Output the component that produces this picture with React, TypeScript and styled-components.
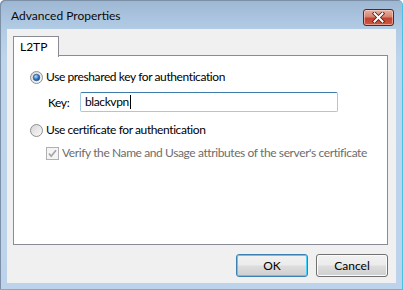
import styled, { createGlobalStyle } from 'styled-components';

const GlobalStyle = createGlobalStyle`
  html, body {
    margin: 0;
    padding: 0;
    background: #ffffff;
  }
  body {
    font-family: Lato, "Noto Sans", sans-serif;
    font-size: 12px;
    color: #000;
  }
`

const Frame = styled.div`
  width: 403px;
  height: 290px;
  box-sizing: border-box;
  display: flex;
  flex-direction: column;
  background: linear-gradient(180deg, #9db7d3 0px, #b2cbe5 28px, #bdd4ec 60px, #bcd3eb 100%);
  border-right: 1px solid #45c2e6;
  border-bottom: 1px solid #45c2e6;
  border-top-left-radius: 5px;
  border-top-right-radius: 5px;
  box-shadow: inset 1px 1px 0 #7b8fa6;
`

const TitleBar = styled.div`
  height: 29px;
  flex: 0 0 29px;
  display: flex;
  align-items: flex-start;
  justify-content: space-between;
  padding: 0 8px 0 11px;
`

const Title = styled.span`
  margin-top: 8px;
  font-size: 12px;
  line-height: 16px;
  color: #0a0a0a;
`

const CloseButton = styled.div`
  margin-top: 9px;
  width: 31px;
  height: 17px;
  box-sizing: border-box;
  border: 1px solid #5b2622;
  border-radius: 3px;
  background: linear-gradient(180deg, #e8b1a6 0%, #d7836f 45%, #c2432f 55%, #cb5a42 100%);
  box-shadow: inset 0 0 0 1px rgba(255, 220, 210, 0.55);
  display: flex;
  align-items: center;
  justify-content: center;
`

const Client = styled.div`
  flex: 1;
  margin: 0 6px 6px 7px;
  background: #f0f0f0;
  display: flex;
  flex-direction: column;
  padding: 7px 8px 0 6px;
`

const TabStrip = styled.div`
  display: flex;
  height: 20px;
  position: relative;
  z-index: 1;
  margin-bottom: -1px;
`

const Tab = styled.div`
  width: 46px;
  box-sizing: border-box;
  height: 21px;
  background: #ffffff;
  border: 1px solid #898c95;
  border-bottom: none;
  padding: 2px 0 0 6px;
  line-height: 16px;
`

const Panel = styled.div`
  height: 190px;
  box-sizing: border-box;
  background: #ffffff;
  border: 1px solid #898c95;
  padding: 13px 0 0 16px;
  display: flex;
  flex-direction: column;
  letter-spacing: -0.4px;
`

const OptionRow = styled.label<{ $indent?: number; $gap?: number }>`
  display: flex;
  align-items: center;
  height: 16px;
  margin-left: ${p => p.$indent ?? 0}px;
  margin-top: ${p => p.$gap ?? 0}px;
  gap: 3px;
  line-height: 16px;
  svg {
    flex: 0 0 auto;
  }
`

const OptionText = styled.span<{ $disabled?: boolean }>`
  color: ${p => (p.$disabled ? '#6d6d6d' : '#000')};
  white-space: nowrap;
`

const KeyRow = styled.div`
  display: flex;
  align-items: center;
  margin-top: 7px;
  margin-left: 18px;
`

const KeyLabel = styled.span`
  width: 32px;
`

const KeyInput = styled.div`
  width: 258px;
  height: 20px;
  box-sizing: border-box;
  border: 1px solid #a4c9e3;
  border-top-color: #3d7bad;
  border-radius: 2px;
  background: #fff;
  padding: 0 0 0 4px;
  display: flex;
  align-items: center;
  line-height: 16px;
`

const Caret = styled.span`
  display: inline-block;
  width: 1px;
  height: 14px;
  background: #000;
  margin-left: 1px;
`

const ButtonBar = styled.div`
  display: flex;
  justify-content: flex-end;
  gap: 8px;
  margin-top: 9px;
`

const Button = styled.div<{ $default?: boolean }>`
  width: 72px;
  height: 23px;
  box-sizing: border-box;
  border: 1px solid ${p => (p.$default ? '#3c7fb1' : '#707070')};
  border-radius: 3px;
  background: linear-gradient(180deg, #f2f2f2 0%, #ebebeb 48%, #dddddd 52%, #cfcfcf 100%);
  box-shadow: inset 0 0 0 1px ${p => (p.$default ? '#48d2fb' : '#fcfcfc')};
  display: flex;
  align-items: center;
  justify-content: center;
  line-height: 16px;
`

const Radio = ({ checked }: { checked?: boolean }) => (
  <svg width="13" height="13" viewBox="0 0 13 13">
    <defs>
      <linearGradient id="rbg" x1="0" y1="0" x2="1" y2="1">
        <stop offset="0" stopColor="#d5d5d5" />
        <stop offset="1" stopColor="#fbfbfb" />
      </linearGradient>
      <radialGradient id="rdot" cx="0.4" cy="0.35" r="0.7">
        <stop offset="0" stopColor="#b8e1ff" />
        <stop offset="0.5" stopColor="#3d85cc" />
        <stop offset="1" stopColor="#14407a" />
      </radialGradient>
    </defs>
    <circle cx="6.5" cy="6.5" r="6" fill="url(#rbg)" stroke="#8e8f8f" strokeWidth="1" />
    {checked && <circle cx="6.5" cy="6.5" r="3.3" fill="url(#rdot)" stroke="#1c4f86" strokeWidth="0.6" />}
  </svg>
)

const DisabledCheck = () => (
  <svg width="13" height="13" viewBox="0 0 13 13">
    <rect x="0.5" y="0.5" width="12" height="12" fill="#f4f4f4" stroke="#b1b1b1" />
    <path d="M3 6.5 L5.2 9.3 L10 3.2" fill="none" stroke="#a3a3a3" strokeWidth="1.6" />
  </svg>
)

export default function App() {
  return (
    <>
      <GlobalStyle />
      <Frame>
        <TitleBar>
          <Title>Advanced Properties</Title>
          <CloseButton>
            <svg width="13" height="11" viewBox="0 0 13 11">
              <path d="M2.5 1.5 L10.5 9.5 M10.5 1.5 L2.5 9.5" stroke="#4a1a16" strokeWidth="3.6" strokeLinecap="square" />
              <path d="M2.5 1.5 L10.5 9.5 M10.5 1.5 L2.5 9.5" stroke="#ffffff" strokeWidth="2" strokeLinecap="square" />
            </svg>
          </CloseButton>
        </TitleBar>
        <Client>
          <TabStrip>
            <Tab>L2TP</Tab>
          </TabStrip>
          <Panel>
            <OptionRow>
              <Radio checked />
              <OptionText>Use preshared key for authentication</OptionText>
            </OptionRow>
            <KeyRow>
              <KeyLabel>Key:</KeyLabel>
              <KeyInput>
                blackvpn<Caret />
              </KeyInput>
            </KeyRow>
            <OptionRow $gap={10}>
              <Radio />
              <OptionText>Use certificate for authentication</OptionText>
            </OptionRow>
            <OptionRow $indent={16} $gap={7}>
              <DisabledCheck />
              <OptionText $disabled>Verify the Name and Usage attributes of the server's certificate</OptionText>
            </OptionRow>
          </Panel>
          <ButtonBar>
            <Button $default>OK</Button>
            <Button>Cancel</Button>
          </ButtonBar>
        </Client>
      </Frame>
    </>
  )
}
